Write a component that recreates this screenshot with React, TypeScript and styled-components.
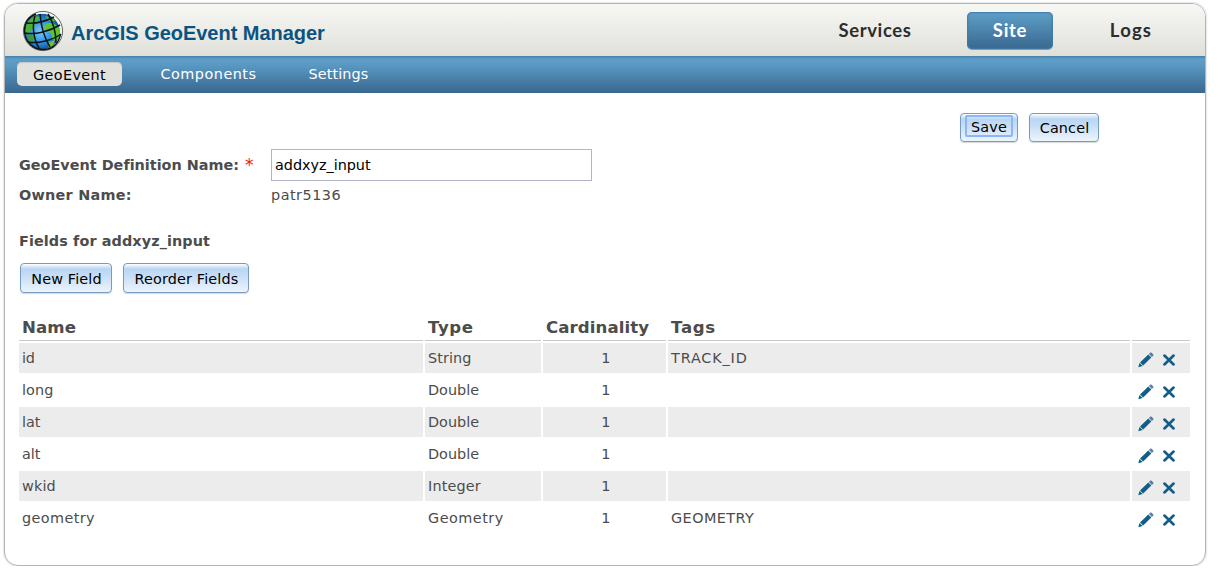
import React from 'react';
import styled, { createGlobalStyle } from 'styled-components';

const GlobalStyle = createGlobalStyle`
  * { box-sizing: border-box; }
  body {
    margin: 0;
    background: #fff;
    color: #4c4c4c;
    font-family: 'DejaVu Sans', Verdana, sans-serif;
    font-size: 14.4px;
  }
`;

const Frame = styled.div`
  width: 1202px;
  height: 563px;
  margin: 3px 0 0 4px;
  border: 1px solid #b4b4b4;
  border-radius: 14px;
  box-shadow: 0 0 2px rgba(0, 0, 0, 0.3);
  overflow: hidden;
  display: flow-root;
`;

const Header = styled.header`
  height: 52px;
  display: flex;
  align-items: center;
  background: linear-gradient(#f7f8f4, #e0e0db);
`;

const Logo = styled.svg`
  width: 42px;
  height: 42px;
  margin: 2px 0 0 17px;
  flex: none;
`;

const Title = styled.h1`
  margin: 6px 0 0 7px;
  width: 480px;
  flex: none;
  font: bold 20px/24px 'Liberation Sans', Arial, sans-serif;
  letter-spacing: -0.03px;
  color: #0b5480;
`;

const MainNav = styled.nav`
  display: flex;
  gap: 34px;
  margin-left: 266px;
`;

const MainLink = styled.a<{ $width: number; $active?: boolean; $spacing: number }>`
  width: ${(p) => p.$width}px;
  height: 37px;
  border-radius: 5px;
  text-align: center;
  font: bold 18.5px/36px Lato, sans-serif;
  letter-spacing: ${(p) => p.$spacing}px;
  color: ${(p) => (p.$active ? '#fff' : '#2d2d2d')};
  ${(p) =>
    p.$active &&
    `background: linear-gradient(#5e9fc8, #39688f);
     box-shadow: inset 0 0 2px 1px #3f7ba5, 0 1px 0 #6ea3c4;`}
`;

const SubNav = styled.nav`
  height: 37px;
  display: flex;
  align-items: flex-start;
  padding: 6px 0 0 12px;
  background: linear-gradient(#447fa8 0, #5d9ec8 3px, #5b9ac4 8px, #38678f 100%);
`;

const SubLink = styled.a<{ $width: number; $active?: boolean; $spacing: number }>`
  width: ${(p) => p.$width}px;
  height: 24px;
  border-radius: 5px;
  text-align: center;
  line-height: ${(p) => (p.$active ? 27 : 25)}px;
  letter-spacing: ${(p) => p.$spacing}px;
  color: ${(p) => (p.$active ? '#000' : '#fff')};
  background: ${(p) => (p.$active ? '#e1e1dd' : 'transparent')};
  box-shadow: ${(p) => (p.$active ? 'inset 0 1px 1px #c5c9ca' : 'none')};
`;

const Actions = styled.div`
  display: flex;
  gap: 11px;
  padding: 20px 0 0 955px;
`;

const Button = styled.button<{ $width: number; $height?: number; $spacing?: number }>`
  width: ${(p) => p.$width}px;
  height: ${(p) => p.$height ?? 30}px;
  padding: ${(p) => (p.$height ? 0 : 2)}px 0 0 1px;
  border: 1px solid #769dc0;
  border-radius: 4px;
  background: linear-gradient(#fff 0, #e1edfa 2px, #bad6f3 5px, #c5dcf5 40%, #edf4fc 100%);
  box-shadow: 0 1px 1px rgba(0, 0, 0, 0.16);
  color: #000;
  font: 14.4px/26px 'DejaVu Sans', Verdana, sans-serif;
  letter-spacing: ${(p) => p.$spacing ?? 0.14}px;
  white-space: nowrap;
`;

const FocusRing = styled.span`
  display: block;
  height: 22px;
  margin: -3px 4px 0 3px;
  border: 2px solid #8cb6fa;
  border-radius: 2px;
  line-height: 21px;
`;

const Form = styled.div`
  display: grid;
  grid-template-columns: 252px 321px;
  grid-template-rows: 32px 28px;
  align-items: center;
  margin: 7px 0 0 14px;
`;

const Label = styled.label<{ $spacing: number }>`
  display: flex;
  align-items: center;
  height: 20px;
  font-weight: bold;
  letter-spacing: ${(p) => p.$spacing}px;
  white-space: nowrap;
`;

const Required = styled.span`
  color: #f01818;
  font-size: 17px;
  font-weight: normal;
  margin-left: 6px;
`;

const TextInput = styled.input`
  width: 321px;
  height: 32px;
  padding: 0 3px;
  border: 1px solid #b1b5c5;
  color: #000;
  font: 14.4px 'DejaVu Sans', Verdana, sans-serif;
  letter-spacing: -0.03px;
`;

const Owner = styled.span`
  letter-spacing: 0.5px;
`;

const SectionTitle = styled.h2`
  margin: 23px 0 0 14px;
  font-size: 14.4px;
  line-height: 18px;
  letter-spacing: 0.1px;
`;

const FieldActions = styled.div`
  display: flex;
  gap: 11px;
  margin: 13px 0 0 15px;
`;

const Table = styled.div`
  width: 1171px;
  margin: 20px 0 0 14px;
  display: grid;
  gap: 2px;
`;

const Row = styled.div`
  display: grid;
  grid-template-columns: 404px 116px 123px 462px 58px;
  gap: 2px;
`;

const HeadCell = styled.div<{ $spacing?: number }>`
  height: 28px;
  padding-left: 3px;
  border-bottom: 1px solid #c9c9c9;
  font-weight: bold;
  font-size: 16.6px;
  line-height: 30px;
  letter-spacing: ${(p) => p.$spacing ?? 0}px;
  white-space: nowrap;
`;

const Cell = styled.div<{ $shaded: boolean; $center?: boolean; $spacing?: number }>`
  height: 30px;
  padding-left: 3px;
  line-height: 30px;
  text-align: ${(p) => (p.$center ? 'center' : 'left')};
  letter-spacing: ${(p) => p.$spacing ?? 0.25}px;
  background: ${(p) => (p.$shaded ? '#ececec' : '#fff')};
`;

const IconCell = styled(Cell)`
  display: flex;
  gap: 7px;
  padding: 9px 0 0 6px;
`;

const Icon = styled.svg`
  width: 16px;
  height: 16px;
  flex: none;
`;

const GlobeIcon = () => (
  <Logo viewBox="0 0 42 42">
    <defs>
      <radialGradient id="sea" cx="45%" cy="50%">
        <stop offset="0" stopColor="#7cc8f6" />
        <stop offset="0.6" stopColor="#2f93e4" />
        <stop offset="1" stopColor="#1459a8" />
      </radialGradient>
      <clipPath id="disc"><circle cx="20" cy="21.5" r="17.8" /></clipPath>
    </defs>
    <circle cx="21" cy="21" r="19.6" fill="#f4f4f2" stroke="#555" strokeWidth="0.9" />
    <g clipPath="url(#disc)">
      <circle cx="20" cy="21.5" r="18" fill="url(#sea)" />
      <path d="M3 17 L7 10 13 6 18 7 16 11 12 13 13 17 9 20 7 24 3 24Z" fill="#4bb135" />
      <path d="M22 17 L25 13 31 13 38 18 38 26 34 31 30 29 29 23 23 21Z" fill="#5fc52c" />
      <path d="M23 6 L29 7 34 11 29 12 25 9Z" fill="#4bb135" />
      <path d="M5 25 L10 24 12 28 11 33 7 31Z" fill="#3b9a3a" />
      <path d="M27 32 L33 30 31 36 26 37Z" fill="#6cc238" />
    </g>
    <g fill="none" stroke="#0c1614" strokeWidth="1.5">
      <path d="M14 4C6 7 2.500 13 2.500 21C3 32 11 39.500 21 39.500C31 39.500 37 33 38.500 24" />
      <path d="M13 6C10 15 11 28 17 38" />
      <path d="M18 4C19 16 23 29 28 37" />
      <path d="M26 4C31 12 34 21 34 33" />
      <path d="M5 13C14 14 24 11 32 7" />
      <path d="M3 23C14 25 28 21 38 15" />
      <path d="M6 32C16 34 31 30 39 24" />
    </g>
  </Logo>
);

const PencilIcon = () => (
  <Icon viewBox="0 0 16 16" fill="#135e88">
    <path d="M0.300 15.200 L1.500 11 L4.700 14.100Z" />
    <path d="M2 10.500 L10.300 2.500 L13.300 5.400 L5.200 13.600Z" />
    <path d="M11 1.900 L12.300 0.600 C13.100 0 16 2.500 15.400 3.500 L13.900 4.900Z" opacity="0.75" />
  </Icon>
);

const DeleteIcon = () => (
  <Icon viewBox="0 0 16 16">
    <path d="M3.400 3.600 L12.600 12.400 M12.600 3.600 L3.400 12.400" stroke="#135e88" strokeWidth="2.700" strokeLinecap="round" />
  </Icon>
);

const fields = [
  { name: 'id', type: 'String', tags: 'TRACK_ID', spacing: [-0.2, 0.1, 0.85] },
  { name: 'long', type: 'Double', tags: '', spacing: [0.1, 0, 0] },
  { name: 'lat', type: 'Double', tags: '', spacing: [0, 0, 0] },
  { name: 'alt', type: 'Double', tags: '', spacing: [0, 0, 0] },
  { name: 'wkid', type: 'Integer', tags: '', spacing: [0.15, 0.17, 0] },
  { name: 'geometry', type: 'Geometry', tags: 'GEOMETRY', spacing: [0.4, 0.5, 0.45] },
];

export default function App() {
  return (
    <>
      <GlobalStyle />
      <Frame>
        <Header>
          <GlobeIcon />
          <Title>ArcGIS GeoEvent Manager</Title>
          <MainNav>
            <MainLink $width={116} $spacing={0.6}>Services</MainLink>
            <MainLink $width={86} $spacing={0.7} $active>Site</MainLink>
            <MainLink $width={88} $spacing={1.2}>Logs</MainLink>
          </MainNav>
        </Header>
        <SubNav>
          <SubLink $width={105} $spacing={0.4} $active>GeoEvent</SubLink>
          <SubLink $width={173} $spacing={0.5}>Components</SubLink>
          <SubLink $width={87} $spacing={0.1}>Settings</SubLink>
        </SubNav>
        <Actions>
          <Button $width={58} $height={29} $spacing={0.2}><FocusRing>Save</FocusRing></Button>
          <Button $width={70} $height={29}>Cancel</Button>
        </Actions>
        <Form>
          <Label $spacing={0.01}>GeoEvent Definition Name:<Required>*</Required></Label>
          <TextInput defaultValue="addxyz_input" />
          <Label $spacing={0.25}>Owner Name:</Label>
          <Owner>patr5136</Owner>
        </Form>
        <SectionTitle>Fields for addxyz_input</SectionTitle>
        <FieldActions>
          <Button $width={92}>New Field</Button>
          <Button $width={126}>Reorder Fields</Button>
        </FieldActions>
        <Table>
          <Row>
            <HeadCell $spacing={0.1}>Name</HeadCell>
            <HeadCell $spacing={0.6}>Type</HeadCell>
            <HeadCell $spacing={0.08}>Cardinality</HeadCell>
            <HeadCell $spacing={0.7}>Tags</HeadCell>
            <HeadCell />
          </Row>
          {fields.map((f, i) => (
            <Row key={f.name}>
              <Cell $shaded={i % 2 === 0} $spacing={f.spacing[0]}>{f.name}</Cell>
              <Cell $shaded={i % 2 === 0} $spacing={f.spacing[1]}>{f.type}</Cell>
              <Cell $shaded={i % 2 === 0} $center>1</Cell>
              <Cell $shaded={i % 2 === 0} $spacing={f.spacing[2]}>{f.tags}</Cell>
              <IconCell $shaded={i % 2 === 0}>
                <PencilIcon />
                <DeleteIcon />
              </IconCell>
            </Row>
          ))}
        </Table>
      </Frame>
    </>
  );
}
